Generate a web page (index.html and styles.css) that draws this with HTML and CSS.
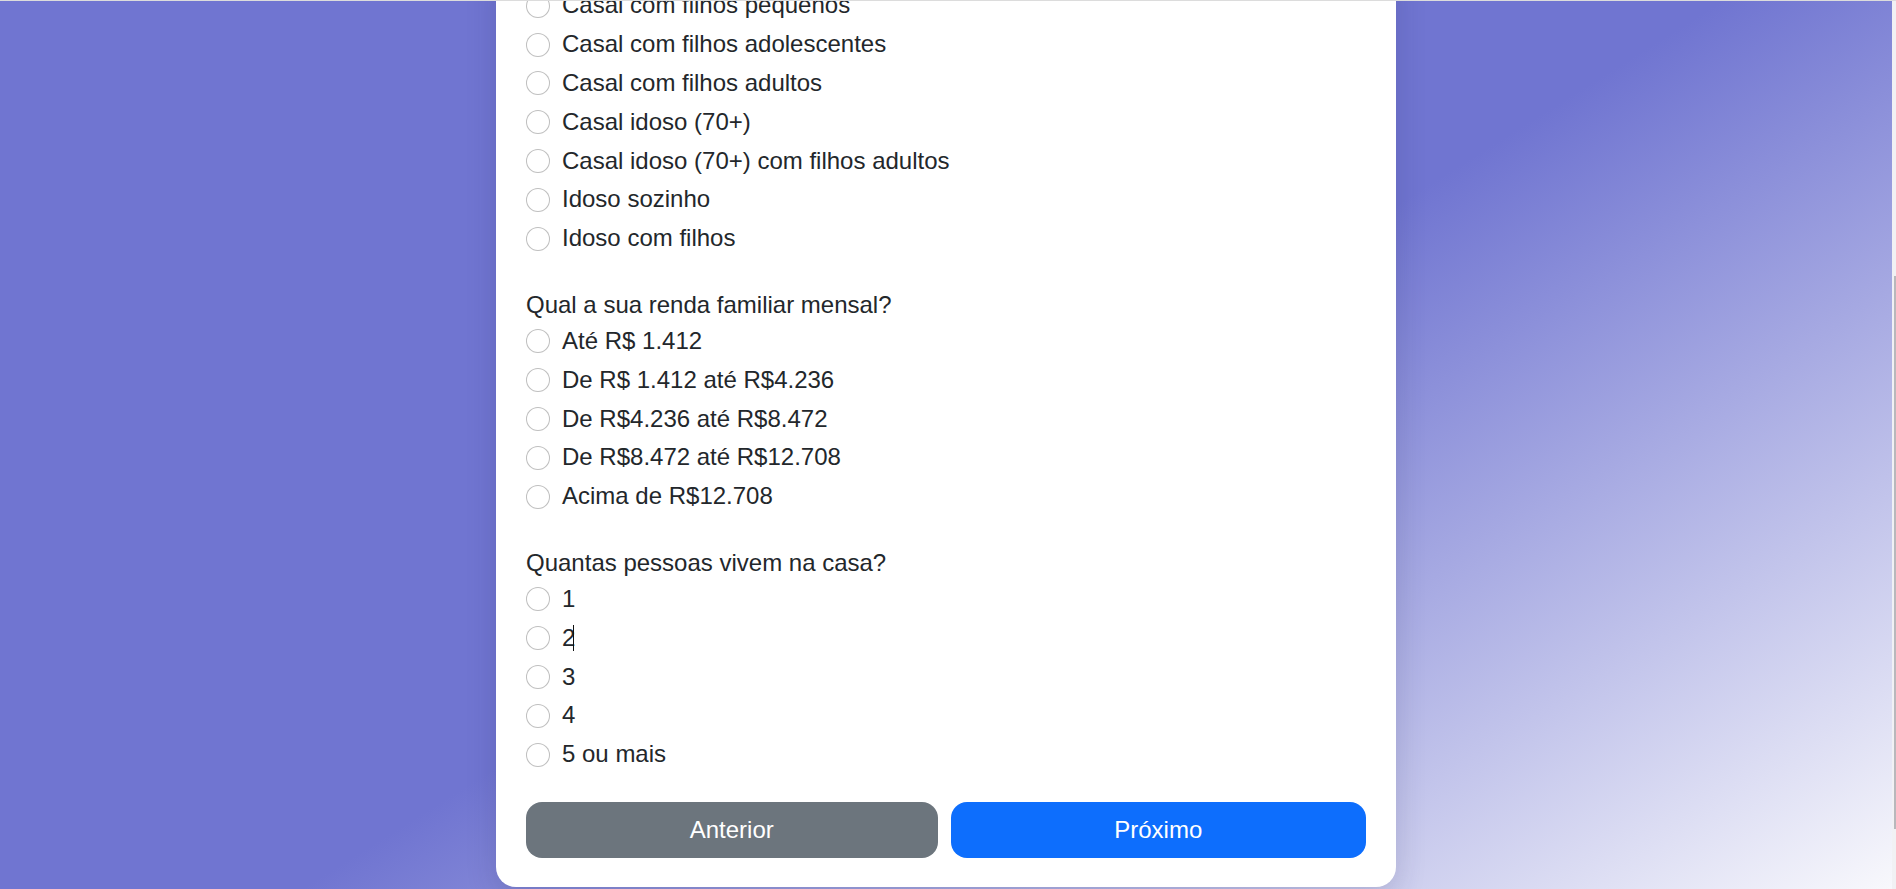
FILE: index.html
```html
<!DOCTYPE html>
<html lang="pt-BR">
<head>
<meta charset="utf-8">
<title>Questionário</title>
<link rel="stylesheet" href="styles.css">
</head>
<body>
<div class="screen">
  <main class="page">
    <form class="card">
      <div class="group">
        <label class="option"><input type="radio" name="familia"><span>Casal com filhos pequenos</span></label>
        <label class="option"><input type="radio" name="familia"><span>Casal com filhos adolescentes</span></label>
        <label class="option"><input type="radio" name="familia"><span>Casal com filhos adultos</span></label>
        <label class="option"><input type="radio" name="familia"><span>Casal idoso (70+)</span></label>
        <label class="option"><input type="radio" name="familia"><span>Casal idoso (70+) com filhos adultos</span></label>
        <label class="option"><input type="radio" name="familia"><span>Idoso sozinho</span></label>
        <label class="option"><input type="radio" name="familia"><span>Idoso com filhos</span></label>
      </div>
      <div class="group">
        <p class="question">Qual a sua renda familiar mensal?</p>
        <label class="option"><input type="radio" name="renda"><span>Até R$ 1.412</span></label>
        <label class="option"><input type="radio" name="renda"><span>De R$ 1.412 até R$4.236</span></label>
        <label class="option"><input type="radio" name="renda"><span>De R$4.236 até R$8.472</span></label>
        <label class="option"><input type="radio" name="renda"><span>De R$8.472 até R$12.708</span></label>
        <label class="option"><input type="radio" name="renda"><span>Acima de R$12.708</span></label>
      </div>
      <div class="group group-last">
        <p class="question">Quantas pessoas vivem na casa?</p>
        <label class="option"><input type="radio" name="pessoas"><span>1</span></label>
        <label class="option"><input type="radio" name="pessoas"><span>2</span><i class="caret"></i></label>
        <label class="option"><input type="radio" name="pessoas"><span>3</span></label>
        <label class="option"><input type="radio" name="pessoas"><span>4</span></label>
        <label class="option"><input type="radio" name="pessoas"><span>5 ou mais</span></label>
      </div>
      <div class="actions">
        <button type="button" class="btn btn-secondary">Anterior</button>
        <button type="button" class="btn btn-primary">Próximo</button>
      </div>
    </form>
  </main>
  <div class="scrollbar"><div class="thumb"></div></div>
</div>
</body>
</html>
```
FILE: styles.css
```css
* { box-sizing: border-box; }

html, body {
  margin: 0;
  height: 100%;
  overflow: hidden;
}

body {
  font-family: "Liberation Sans", Arial, sans-serif;
  color: #23272b;
}

.screen {
  display: flex;
  height: 100vh;
  border-top: 1px solid #dcdcdc;
}

.page {
  flex: 1;
  min-width: 0;
  display: flex;
  flex-direction: column;
  justify-content: flex-end;
  align-items: center;
  padding-bottom: 2px;
  overflow: hidden;
  background: linear-gradient(148deg, #7075d1 0%, #7075d1 52%, #f8f8fc 100%);
}

.card {
  flex-shrink: 0;
  width: 900px;
  margin: 0;
  padding: 30px 30px 29px;
  background: #fff;
  border-radius: 20px;
  box-shadow: 0 10px 30px rgba(40, 40, 90, 0.18);
}

.group {
  display: flex;
  flex-direction: column;
  margin-bottom: 28px;
}

.group-last {
  margin-bottom: 23px;
}

.question {
  margin: 0 0 7.2px;
  font-size: 24px;
  line-height: 28.8px;
}

.option {
  display: flex;
  align-items: center;
  height: 28.8px;
  margin-bottom: 10px;
  font-size: 24px;
  line-height: 28.8px;
  white-space: nowrap;
}

.option input {
  appearance: none;
  -webkit-appearance: none;
  flex-shrink: 0;
  width: 24px;
  height: 24px;
  margin: 0 12px 0 0;
  border: 1px solid rgba(0, 0, 0, 0.25);
  border-radius: 50%;
  background: #fff;
}

.caret {
  display: inline-block;
  width: 1px;
  height: 26px;
  margin-left: -2px;
  background: #111;
}

.actions {
  display: flex;
  gap: 13px;
}

.btn {
  flex: 1 1 auto;
  height: 56px;
  padding: 0 12px;
  border: none;
  border-radius: 16px;
  font-family: inherit;
  font-size: 24px;
  color: #fff;
}

.btn-secondary { background: #6c757d; }
.btn-primary { background: #0d6efd; }

.scrollbar {
  width: 4px;
  flex-shrink: 0;
  background: #f1f1f4;
  padding-top: 275px;
}

.thumb {
  width: 2px;
  height: 553px;
  margin-left: 2px;
  background: #b8b8bc;
}
```
